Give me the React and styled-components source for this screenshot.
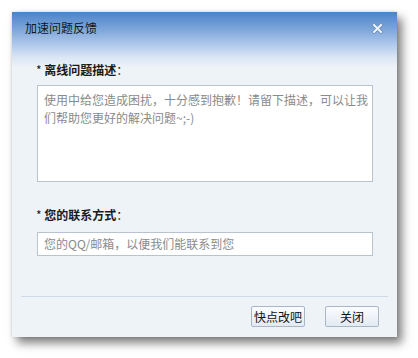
import styled, { createGlobalStyle } from 'styled-components'

const GlobalStyle = createGlobalStyle`
    html, body {
        margin: 0;
        padding: 0;
        background: #ffffff;
    }
    body {
        font-family: "Noto Sans CJK SC", "Noto Sans", sans-serif;
        font-size: 12px;
    }
`;

const Page = styled.div`
    width: 418px;
    height: 358px;
    padding: 12px 0 0 12px;
    box-sizing: border-box;
`;

const Dialog = styled.div`
    width: 385px;
    height: 325px;
    display: flex;
    flex-direction: column;
    background: linear-gradient(
        to bottom,
        #4a83c9 0px,
        #7fa7da 18px,
        #b4cced 34px,
        #dce7f4 46px,
        #eef3f8 56px
    );
    box-shadow: 5px 6px 9px rgba(0, 0, 0, 0.5), 0 0 3px rgba(0, 0, 0, 0.15);
`;

const TitleBar = styled.div`
    height: 32px;
    display: flex;
    align-items: center;
    justify-content: space-between;
    padding: 0 13px 0 13px;
`;

const Title = styled.span`
    color: #101820;
    font-size: 12px;
    line-height: 32px;
`;

const CloseButton = styled.div`
    width: 11px;
    height: 11px;
    display: flex;
    margin-right: 1px;
    cursor: pointer;
`;

const Body = styled.div`
    flex: 1;
    padding: 18px 24px 0 25px;
    display: flex;
    flex-direction: column;
`;

const Label = styled.div`
    color: #1a1a1a;
    line-height: 16px;
    margin-left: -1px;
    margin-top: ${props => props.gap || "0px"};
`;

const LabelText = styled.span`
    font-weight: 700;
`;

const TextArea = styled.div`
    margin-top: 7px;
    height: 97px;
    background: #ffffff;
    border: 1px solid #b9c3cd;
    box-sizing: border-box;
    padding: 5px 2px 5px 6px;
    color: #8a8a8a;
    line-height: 18px;
`;

const Input = styled.div`
    margin-top: 9px;
    height: 24px;
    background: #ffffff;
    border: 1px solid #b9c3cd;
    box-sizing: border-box;
    padding: 0 6px;
    color: #8a8a8a;
    line-height: 22px;
`;

const Footer = styled.div`
    margin: 0 9px;
    border-top: 1px solid #d0dae6;
    height: 41px;
    display: flex;
    justify-content: flex-end;
    align-items: flex-start;
    gap: 20px;
    padding: 9px 9px 0 0;
    box-sizing: border-box;
`;

const Button = styled.button`
    width: 54px;
    height: 21px;
    padding: 0;
    font-family: inherit;
    font-size: 12px;
    color: #111;
    border: 1px solid #a9b6c6;
    border-radius: 2px;
    background: linear-gradient(to bottom, #fbfcfe, #e3eaf2);
    cursor: pointer;
    line-height: 19px;
`;

const App = () => {
  return (
    <Page>
        <GlobalStyle/>
        <Dialog>
            <TitleBar>
                <Title>加速问题反馈</Title>
                <CloseButton>
                    <svg width="11" height="11" viewBox="0 0 11 11">
                        <path d="M2 2 L9 9 M9 2 L2 9" stroke="#6a8cb8" strokeWidth="3.6" strokeLinecap="square"/>
                        <path d="M2 2 L9 9 M9 2 L2 9" stroke="#eef3f9" strokeWidth="2" strokeLinecap="square"/>
                    </svg>
                </CloseButton>
            </TitleBar>
            <Body>
                <Label>* <LabelText>离线问题描述</LabelText>：</Label>
                <TextArea>使用中给您造成困扰，十分感到抱歉！请留下描述，可以让我们帮助您更好的解决问题~;-)</TextArea>
                <Label gap="25px">* <LabelText>您的联系方式</LabelText>：</Label>
                <Input>您的QQ/邮箱，以便我们能联系到您</Input>
            </Body>
            <Footer>
                <Button>快点改吧</Button>
                <Button>关闭</Button>
            </Footer>
        </Dialog>
    </Page>
  );
};

export default App
